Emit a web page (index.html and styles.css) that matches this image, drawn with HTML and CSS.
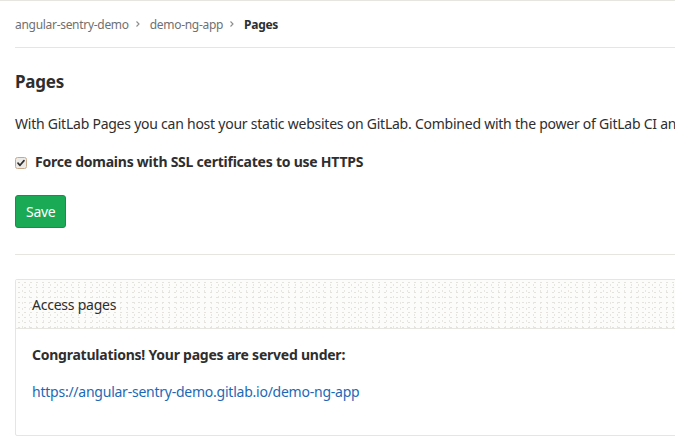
FILE: index.html
```html
<!DOCTYPE html>
<html>
<head>
<meta charset="utf-8">
<link rel="stylesheet" href="styles.css">
</head>
<body>
<div class="page">
  <nav class="breadcrumbs">
    <a class="crumb" href="#">angular-sentry-demo</a>
    <svg class="chev" width="8" height="8" viewBox="0 0 8 8"><path d="M2.5 1.5 L5 4 L2.5 6.5" fill="none" stroke="#8c8c8c" stroke-width="1.1"/></svg>
    <a class="crumb" href="#">demo-ng-app</a>
    <svg class="chev" width="8" height="8" viewBox="0 0 8 8"><path d="M2.5 1.5 L5 4 L2.5 6.5" fill="none" stroke="#8c8c8c" stroke-width="1.1"/></svg>
    <span class="crumb current">Pages</span>
  </nav>
  <section class="settings">
    <h3 class="title">Pages</h3>
    <p class="intro">With GitLab Pages you can host your static websites on GitLab. Combined with the power of GitLab CI and the help of GitLab Runner you can deploy static pages for your individual projects, your user or your group.</p>
    <label class="check">
      <input class="check-input" type="checkbox" checked>
      <svg class="check-box" width="12" height="12" viewBox="0 0 12 12"><rect x="0.5" y="0.5" width="11" height="11" rx="2" fill="#ecebe8" stroke="#c9a98a"/><path d="M3 6.2 L5 8.3 L9 3.6" fill="none" stroke="#2f2f2f" stroke-width="1.7" stroke-linecap="round" stroke-linejoin="round"/></svg>
      <span>Force domains with SSL certificates to use HTTPS</span>
    </label>
    <button class="btn-save">Save</button>
  </section>
  <div class="card">
    <div class="card-header">Access pages</div>
    <div class="card-body">
      <p class="congrats">Congratulations! Your pages are served under:</p>
      <a class="url" href="#">https://angular-sentry-demo.gitlab.io/demo-ng-app</a>
    </div>
  </div>
</div>
</body>
</html>
```

FILE: styles.css
```css
html, body {
  margin: 0;
  padding: 0;
  background: #fff;
  overflow: hidden;
}
body {
  font-family: "Noto Sans", "Liberation Sans", sans-serif;
  font-size: 14px;
  letter-spacing: -0.24px;
  color: #2e2e2e;
  width: 675px;
  height: 446px;
  border-top: 1px solid #e7e5df;
}
.page {
  padding-left: 15px;
  width: 900px;
}
.breadcrumbs {
  height: 46px;
  display: flex;
  align-items: center;
  border-bottom: 1px solid #e7e5df;
  font-size: 12px;
  letter-spacing: -0.3px;
}
.crumb {
  color: #707070;
  text-decoration: none;
}
.chev {
  margin: 0 8px 0 5px;
}
.crumb.current {
  color: #2e2e2e;
  font-weight: 700;
}
.settings {
  padding-top: 22px;
  padding-bottom: 26px;
  border-bottom: 1px solid #e7e5df;
}
.title {
  margin: 0;
  font-size: 17px;
  line-height: 24px;
  font-weight: 700;
}
.intro {
  margin: 20px 0 0;
  line-height: 20px;
  white-space: nowrap;
}
.check {
  display: flex;
  align-items: center;
  margin-top: 18px;
  font-weight: 700;
  line-height: 20px;
}
.check-input {
  position: absolute;
  opacity: 0;
  width: 1px;
  height: 1px;
  margin: 0;
}
.check-box {
  margin: 1px 8px 0 0;
  flex: none;
}
.btn-save {
  display: block;
  margin-top: 23px;
  height: 33px;
  padding: 0 10px;
  background: #1aaa55;
  border: 1px solid #168f48;
  border-radius: 3px;
  color: #fff;
  font-family: inherit;
  font-size: 14px;
  letter-spacing: -0.3px;
}
.card {
  margin-top: 24px;
  border: 1px solid #e7e5df;
  border-radius: 2px;
}
.card-header {
  height: 48px;
  display: flex;
  align-items: center;
  padding-left: 16px;
  border-bottom: 1px solid #e7e5df;
  background-color: #fcfcfb;
  background-image:
    radial-gradient(circle, #e4e2dc 0.6px, transparent 0.9px),
    radial-gradient(circle, #e8e6e1 0.6px, transparent 0.9px);
  background-size: 6px 5px, 7px 6px;
  background-position: 0 0, 3px 2px;
}
.card-body {
  padding: 16px 16px 33px;
}
.congrats {
  margin: 0;
  font-weight: 700;
  line-height: 20px;
}
.url {
  display: block;
  margin-top: 17px;
  color: #1b69b6;
  text-decoration: none;
  line-height: 20px;
}
```
